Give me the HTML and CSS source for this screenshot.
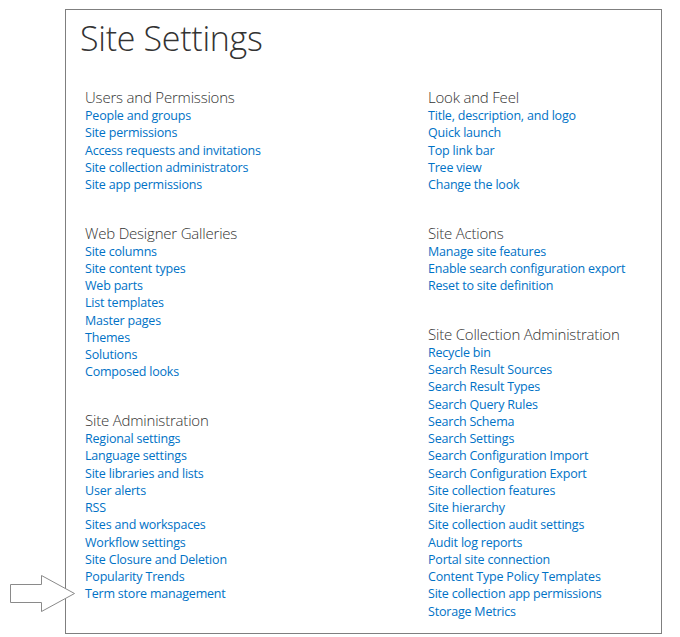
FILE: index.html
```html
<!DOCTYPE html>
<html>
<head>
<meta charset="utf-8">
<link rel="stylesheet" href="styles.css">
</head>
<body>
<div class="page">
  <div class="box">
    <h1 class="title">Site Settings</h1>
    <div class="cols">
      <div class="col">
        <div class="section">
          <div class="head">Users and Permissions</div>
          <a class="link">People and groups</a>
          <a class="link">Site permissions</a>
          <a class="link">Access requests and invitations</a>
          <a class="link">Site collection administrators</a>
          <a class="link">Site app permissions</a>
        </div>
        <div class="section">
          <div class="head">Web Designer Galleries</div>
          <a class="link">Site columns</a>
          <a class="link">Site content types</a>
          <a class="link">Web parts</a>
          <a class="link">List templates</a>
          <a class="link">Master pages</a>
          <a class="link">Themes</a>
          <a class="link">Solutions</a>
          <a class="link">Composed looks</a>
        </div>
        <div class="section">
          <div class="head">Site Administration</div>
          <a class="link">Regional settings</a>
          <a class="link">Language settings</a>
          <a class="link">Site libraries and lists</a>
          <a class="link">User alerts</a>
          <a class="link">RSS</a>
          <a class="link">Sites and workspaces</a>
          <a class="link">Workflow settings</a>
          <a class="link">Site Closure and Deletion</a>
          <a class="link">Popularity Trends</a>
          <a class="link">Term store management</a>
        </div>
      </div>
      <div class="col">
        <div class="section">
          <div class="head">Look and Feel</div>
          <a class="link">Title, description, and logo</a>
          <a class="link">Quick launch</a>
          <a class="link">Top link bar</a>
          <a class="link">Tree view</a>
          <a class="link">Change the look</a>
        </div>
        <div class="section">
          <div class="head">Site Actions</div>
          <a class="link">Manage site features</a>
          <a class="link">Enable search configuration export</a>
          <a class="link">Reset to site definition</a>
        </div>
        <div class="section">
          <div class="head">Site Collection Administration</div>
          <a class="link">Recycle bin</a>
          <a class="link">Search Result Sources</a>
          <a class="link">Search Result Types</a>
          <a class="link">Search Query Rules</a>
          <a class="link">Search Schema</a>
          <a class="link">Search Settings</a>
          <a class="link">Search Configuration Import</a>
          <a class="link">Search Configuration Export</a>
          <a class="link">Site collection features</a>
          <a class="link">Site hierarchy</a>
          <a class="link">Site collection audit settings</a>
          <a class="link">Audit log reports</a>
          <a class="link">Portal site connection</a>
          <a class="link">Content Type Policy Templates</a>
          <a class="link">Site collection app permissions</a>
          <a class="link">Storage Metrics</a>
        </div>
      </div>
    </div>
  </div>
  <svg class="arrow" width="70" height="40" viewBox="0 0 70 40">
    <polygon points="0.5,9.5 31.5,9.5 31.5,0.5 64.5,18.5 31.5,36.5 31.5,27.5 0.5,27.5" fill="#fff" stroke="#8a8a8a" stroke-width="1"/>
  </svg>
</div>
</body>
</html>
```

FILE: styles.css
```css
html, body {
  margin: 0;
  padding: 0;
  background: #fff;
}
.page {
  position: relative;
  width: 680px;
  height: 637px;
  padding-top: 9px;
  box-sizing: border-box;
}
.box {
  margin-left: 65px;
  width: 597px;
  height: 625px;
  box-sizing: border-box;
  border: 1px solid #7f7f7f;
  padding: 0 0 0 19px;
  font-family: "Open Sans", "Noto Sans", sans-serif;
}
.title {
  margin: 0 0 0 -5px;
  padding: 8px 0 0 0;
  height: 77px;
  box-sizing: border-box;
  font-size: 34px;
  line-height: 40px;
  font-weight: 300;
  color: #333;
  letter-spacing: -0.3px;
}
.cols {
  display: grid;
  grid-template-columns: 343px 1fr;
}
.section {
  display: flex;
  flex-direction: column;
  margin-bottom: 29.3px;
}
.head {
  font-size: 15px;
  line-height: 20px;
  height: 20px;
  font-weight: 300;
  color: #333;
  letter-spacing: -0.2px;
}
.link {
  font-size: 12.5px;
  line-height: 17.28px;
  height: 17.28px;
  color: #0072c6;
  white-space: nowrap;
  letter-spacing: -0.2px;
}
.arrow {
  position: absolute;
  left: 10px;
  top: 575px;
}
```
